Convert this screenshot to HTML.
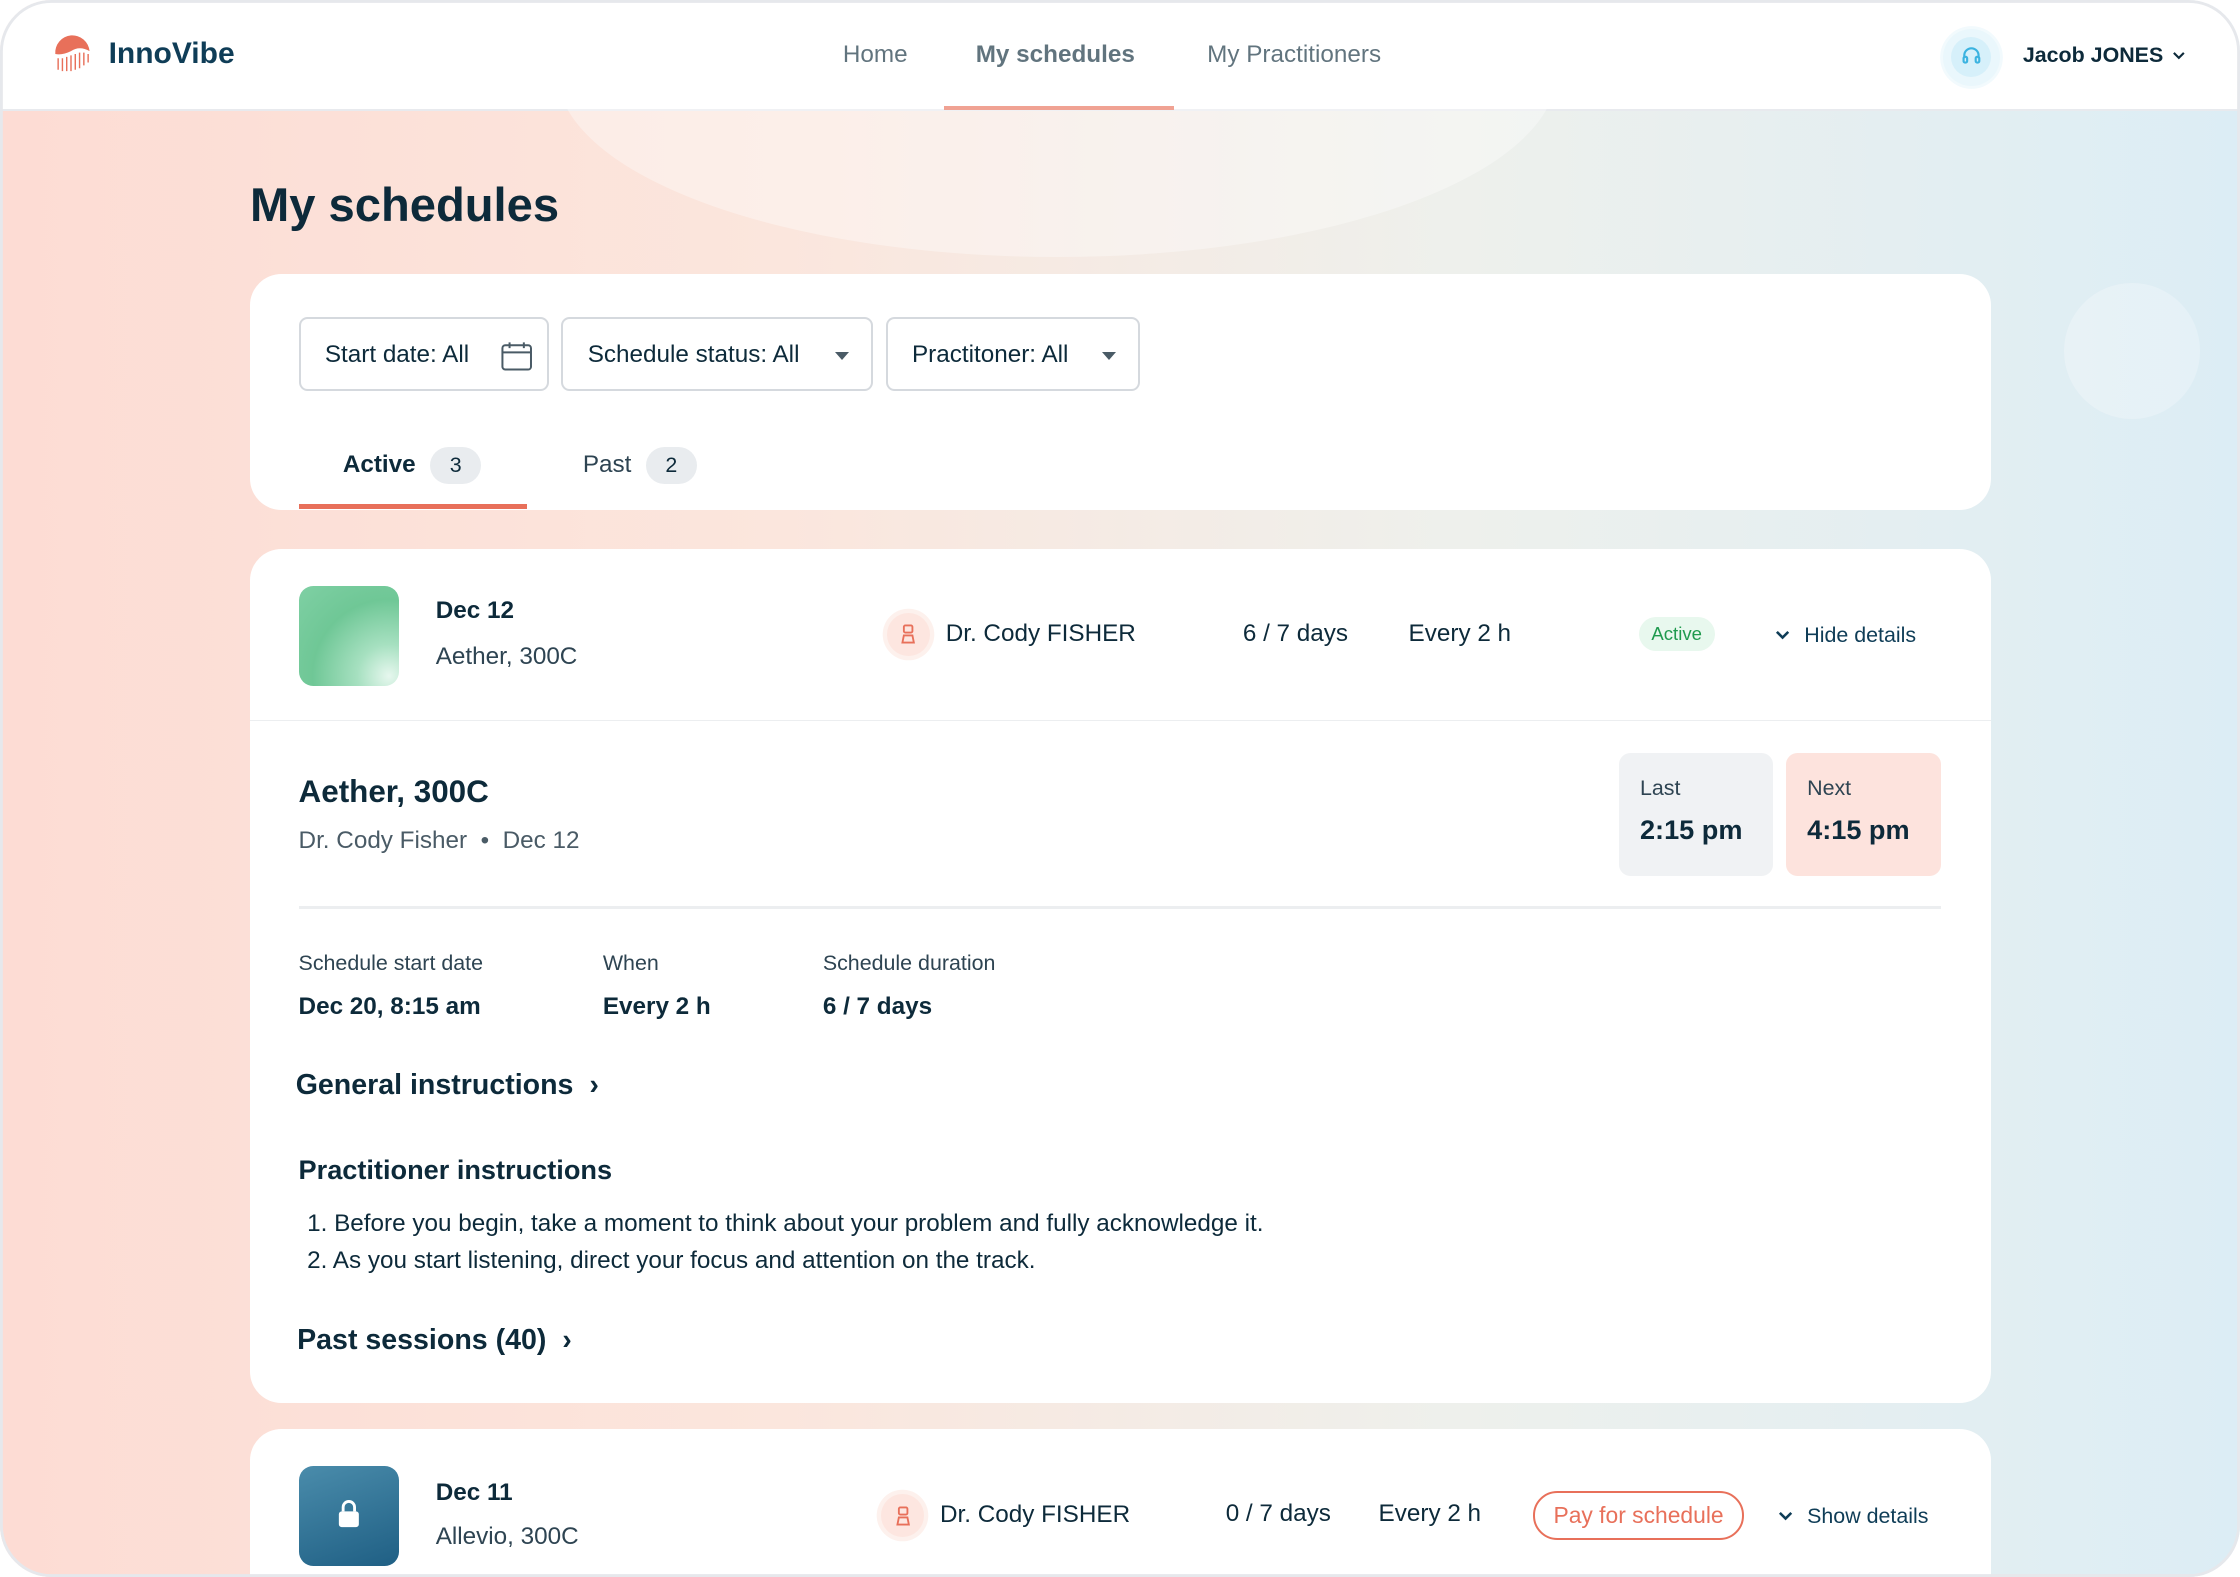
<!DOCTYPE html>
<html><head><meta charset="utf-8"><style>
html{zoom:1.428571}
*{box-sizing:border-box;margin:0;padding:0}
body{width:1568px;height:1104px;overflow:hidden;font-family:"Liberation Sans",sans-serif;color:#0d2a3a;background:#fff}
.frame{position:absolute;left:0;top:0;width:1568px;height:1104px;border-radius:36px;overflow:hidden;background:linear-gradient(90deg,#fddcd4 0%,#fbe6dd 35%,#eef0ec 65%,#dcedf5 100%)}
.edge{position:absolute;left:0;top:0;width:1568px;height:1104px;border-radius:36px;box-shadow:inset 0 0 0 2px #e6e8ec;pointer-events:none;z-index:9}
.hdr{position:absolute;left:0;top:0;width:100%;height:78px;background:#fff;border-bottom:2px solid #e8eaee}
.a{position:absolute;white-space:nowrap}
.card{position:absolute;left:175px;width:1219px;background:#fff;border-radius:22px}
.filt{position:absolute;top:30px;height:52px;border:1.5px solid #d5d9de;border-radius:6px;font-size:17px;line-height:50px;padding-left:17px}
.badge{display:inline-block;width:36px;height:26px;border-radius:13px;background:#e9ecef;text-align:center;line-height:26px;font-size:15px;margin-left:10px;color:#0d2a3a;font-weight:normal}
.lbl{font-size:15px;color:#2e4452}
.val{font-size:17px;font-weight:bold}
.av{position:absolute;width:30px;height:30px;border-radius:50%;background:#fde6e0;box-shadow:0 0 0 3px #fdf1ed}
</style></head><body>
<div class="frame">
<div class="hdr">
 <svg class="a" style="left:36px;top:24px" width="30" height="28" viewBox="0 0 30 28"><path d="M3 14 A12 12 0 0 1 27 12 Q20 8 14 12 Q8 15 3 14Z" fill="#e8705a"/><g stroke="#e8705a" stroke-width="1"><path d="M5 17v8M8 17v9M11 16v10M14 15v11M17 14v11M20 13v11M23 13v9M26 14v6"/></g></svg>
 <div class="a" style="left:76px;top:26px;font-size:21px;font-weight:bold;color:#0f3d57">InnoVibe</div>
 <div class="a" style="left:590px;top:29px;font-size:17px;color:#0d2a3a">Home</div>
 <div class="a" style="left:683px;top:29px;font-size:17px;font-weight:bold">My schedules</div>
 <div class="a" style="left:661px;top:74px;width:161px;height:3px;background:#e8705a"></div>
 <div class="a" style="left:845px;top:29px;font-size:17px;color:#0d2a3a">My Practitioners</div>
 <div class="a" style="left:1360px;top:20px;width:40px;height:40px;border-radius:50%;background:#eaf7fc;box-shadow:0 0 0 2px #f2fafd"><div style="margin:6px;width:28px;height:28px;border-radius:50%;background:#d6f0fa"></div></div>
 <svg class="a" style="left:1372px;top:31px" width="16" height="16" viewBox="0 0 16 16" fill="none" stroke="#3bb3e0" stroke-width="1.5"><path d="M3 10V8a5 5 0 0 1 10 0v2"/><rect x="2.5" y="9" width="2.5" height="4" rx="1"/><rect x="11" y="9" width="2.5" height="4" rx="1"/></svg>
 <div class="a" style="left:1416px;top:30px;font-size:15px;font-weight:bold">Jacob JONES</div>
 <svg class="a" style="left:1520px;top:35px" width="11" height="8" viewBox="0 0 11 8"><path d="M2 2l3.5 3.5L9 2" stroke="#0d2a3a" stroke-width="1.5" fill="none"/></svg>
</div>
<div class="a" style="left:390px;top:-80px;width:700px;height:260px;border-radius:50%;background:rgba(255,255,255,.35)"></div>
<div class="a" style="left:1445px;top:198px;width:95px;height:95px;border-radius:50%;background:rgba(255,255,255,.25)"></div>
<div class="a" style="left:175px;top:124px;font-size:33px;font-weight:bold">My schedules</div>

<div class="card" style="top:192px;height:165px">
 <div class="filt" style="left:34px;width:175px">Start date: All
  <svg class="a" style="left:140px;top:15px" width="22" height="21" viewBox="0 0 22 21" fill="none" stroke="#4a5b66" stroke-width="1.4"><rect x="1" y="3" width="20" height="17" rx="2"/><path d="M1 8h20M6 1v4M16 1v4"/></svg></div>
 <div class="filt" style="left:218px;width:218px">Schedule status: All<span class="a" style="left:190px;top:23px;border:5px solid transparent;border-top:6px solid #4a5b66"></span></div>
 <div class="filt" style="left:445px;width:178px">Practitoner: All<span class="a" style="left:150px;top:23px;border:5px solid transparent;border-top:6px solid #4a5b66"></span></div>
 <div class="a" style="left:65px;top:121px;font-size:17px;font-weight:bold">Active<span class="badge">3</span></div>
 <div class="a" style="left:34px;top:161px;width:160px;height:3px;background:#e8705a"></div>
 <div class="a" style="left:233px;top:121px;font-size:17px;color:#2e4452">Past<span class="badge">2</span></div>
</div>

<div class="card" style="top:384px;height:598px">
 <div class="a" style="left:34px;top:26px;width:70px;height:70px;border-radius:10px;background:radial-gradient(circle at 90% 90%,#e6f7ee 0%,#a6e0c0 25%,#6fc796 60%,#7fd0a4 100%)"></div>
 <div class="a" style="left:130px;top:34px;font-size:17px;font-weight:bold">Dec 12</div>
 <div class="a" style="left:130px;top:66px;font-size:17px;color:#2e4452">Aether, 300C</div>
 <div class="av" style="left:446px;top:45px"><svg style="margin:8px 10px" width="10" height="14" viewBox="0 0 10 14" fill="none" stroke="#e8705a" stroke-width="1.3"><rect x="2" y="1" width="6" height="5" rx="1"/><path d="M1 13l1-5h6l1 5z"/></svg></div>
 <div class="a" style="left:487px;top:50px;font-size:17px">Dr. Cody FISHER</div>
 <div class="a" style="left:695px;top:50px;font-size:17px">6 / 7 days</div>
 <div class="a" style="left:811px;top:50px;font-size:17px">Every 2 h</div>
 <div class="a" style="left:972px;top:48px;height:24px;padding:0 9px;border-radius:12px;background:#e8f8ee;color:#1f9a4e;font-size:13px;line-height:24px">Active</div>
 <svg class="a" style="left:1067px;top:56px" width="12" height="9" viewBox="0 0 12 9"><path d="M2 2l4 4 4-4" stroke="#0f3d57" stroke-width="1.8" fill="none"/></svg>
 <div class="a" style="left:1088px;top:52px;font-size:15px;color:#0f3d57">Hide details</div>
 <div class="a" style="left:0;top:120px;width:100%;height:1px;background:#eceef0"></div>
 <div class="a" style="left:34px;top:158px;font-size:22px;font-weight:bold">Aether, 300C</div>
 <div class="a" style="left:34px;top:195px;font-size:17px;color:#4a5b66">Dr. Cody Fisher &nbsp;•&nbsp; Dec 12</div>
 <div class="a" style="left:958px;top:143px;width:108px;height:86px;border-radius:8px;background:#f0f2f4;padding:16px 15px"><div style="font-size:15px;color:#2e4452">Last</div><div style="font-size:19px;font-weight:bold;margin-top:9px">2:15 pm</div></div>
 <div class="a" style="left:1075px;top:143px;width:109px;height:86px;border-radius:8px;background:#fde3dd;padding:16px 15px"><div style="font-size:15px;color:#2e4452">Next</div><div style="font-size:19px;font-weight:bold;margin-top:9px">4:15 pm</div></div>
 <div class="a" style="left:34px;top:250px;width:1150px;height:2px;background:#eceef0"></div>
 <div class="a lbl" style="left:34px;top:282px">Schedule start date</div><div class="a val" style="left:34px;top:311px">Dec 20, 8:15 am</div>
 <div class="a lbl" style="left:247px;top:282px">When</div><div class="a val" style="left:247px;top:311px">Every 2 h</div>
 <div class="a lbl" style="left:401px;top:282px">Schedule duration</div><div class="a val" style="left:401px;top:311px">6 / 7 days</div>
 <div class="a" style="left:32px;top:364px;font-size:20px;font-weight:bold">General instructions &nbsp;›</div>
 <div class="a" style="left:34px;top:424px;font-size:19px;font-weight:bold">Practitioner instructions</div>
 <div class="a" style="left:40px;top:463px;font-size:17px">1. Before you begin, take a moment to think about your problem and fully acknowledge it.</div>
 <div class="a" style="left:40px;top:489px;font-size:17px">2. As you start listening, direct your focus and attention on the track.</div>
 <div class="a" style="left:33px;top:543px;font-size:20px;font-weight:bold">Past sessions (40) &nbsp;›</div>
</div>

<div class="card" style="top:1000px;height:140px">
 <div class="a" style="left:34px;top:26px;width:70px;height:70px;border-radius:10px;background:linear-gradient(160deg,#4a8cab,#1f5f84)"></div>
 <svg class="a" style="left:60px;top:50px" width="18" height="20" viewBox="0 0 18 20"><rect x="2" y="8" width="14" height="11" rx="2" fill="#fff"/><path d="M5 8V5a4 4 0 0 1 8 0v3" stroke="#fff" stroke-width="2" fill="none"/></svg>
 <div class="a" style="left:130px;top:35px;font-size:17px;font-weight:bold">Dec 11</div>
 <div class="a" style="left:130px;top:66px;font-size:17px;color:#2e4452">Allevio, 300C</div>
 <div class="av" style="left:442px;top:46px"><svg style="margin:8px 10px" width="10" height="14" viewBox="0 0 10 14" fill="none" stroke="#e8705a" stroke-width="1.3"><rect x="2" y="1" width="6" height="5" rx="1"/><path d="M1 13l1-5h6l1 5z"/></svg></div>
 <div class="a" style="left:483px;top:51px;font-size:17px">Dr. Cody FISHER</div>
 <div class="a" style="left:683px;top:50px;font-size:17px">0 / 7 days</div>
 <div class="a" style="left:790px;top:50px;font-size:17px">Every 2 h</div>
 <div class="a" style="left:898px;top:44px;width:148px;height:34px;border:1.5px solid #e8705a;border-radius:17px;color:#e8705a;font-size:16px;line-height:31px;text-align:center">Pay for schedule</div>
 <svg class="a" style="left:1069px;top:57px" width="12" height="9" viewBox="0 0 12 9"><path d="M2 2l4 4 4-4" stroke="#0f3d57" stroke-width="1.8" fill="none"/></svg>
 <div class="a" style="left:1090px;top:53px;font-size:15px;color:#0f3d57">Show details</div>
</div>
</div>
<div class="edge"></div>
</body></html>
